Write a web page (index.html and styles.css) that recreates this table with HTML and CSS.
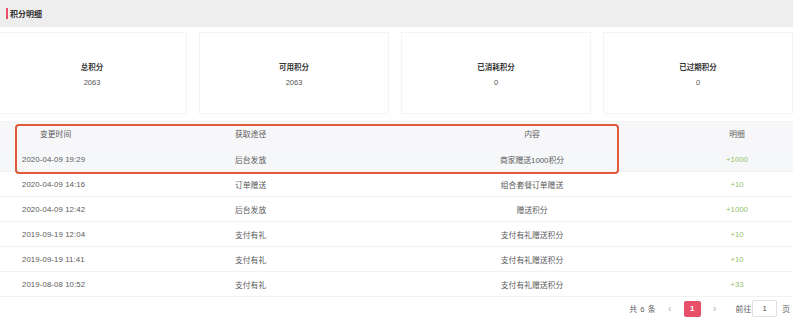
FILE: index.html
```html
<!DOCTYPE html>
<html lang="zh">
<head>
<meta charset="utf-8">
<link rel="stylesheet" href="styles.css">
</head>
<body>
<div class="page">
  <div class="title-bar"><span class="mark"></span><span class="title">积分明细</span></div>
  <div class="cards">
    <div class="card"><div class="card-label">总积分</div><div class="card-value">2063</div></div>
    <div class="card"><div class="card-label">可用积分</div><div class="card-value">2063</div></div>
    <div class="card"><div class="card-label">已消耗积分</div><div class="card-value">0</div></div>
    <div class="card"><div class="card-label">已过期积分</div><div class="card-value">0</div></div>
  </div>
  <div class="table-wrap">
    <div class="row head">
      <div class="c1 h1">变更时间</div>
      <div class="c2">获取途径</div>
      <div class="c3">内容</div>
      <div class="c4">明细</div>
    </div>
    <div class="row hover">
      <div class="c1">2020-04-09 19:29</div>
      <div class="c2">后台发放</div>
      <div class="c3">商家赠送1000积分</div>
      <div class="c4 plus">+1000</div>
    </div>
    <div class="row">
      <div class="c1">2020-04-09 14:16</div>
      <div class="c2">订单赠送</div>
      <div class="c3">组合套餐订单赠送</div>
      <div class="c4 plus">+10</div>
    </div>
    <div class="row">
      <div class="c1">2020-04-09 12:42</div>
      <div class="c2">后台发放</div>
      <div class="c3">赠送积分</div>
      <div class="c4 plus">+1000</div>
    </div>
    <div class="row">
      <div class="c1">2019-09-19 12:04</div>
      <div class="c2">支付有礼</div>
      <div class="c3">支付有礼赠送积分</div>
      <div class="c4 plus">+10</div>
    </div>
    <div class="row">
      <div class="c1">2019-09-19 11:41</div>
      <div class="c2">支付有礼</div>
      <div class="c3">支付有礼赠送积分</div>
      <div class="c4 plus">+10</div>
    </div>
    <div class="row">
      <div class="c1">2019-08-08 10:52</div>
      <div class="c2">支付有礼</div>
      <div class="c3">支付有礼赠送积分</div>
      <div class="c4 plus">+33</div>
    </div>
    <div class="highlight"></div>
  </div>
  <div class="pager">
    <span class="total">共 6 条</span>
    <span class="arrow prev">&lsaquo;</span>
    <span class="pg active">1</span>
    <span class="arrow next">&rsaquo;</span>
    <span class="goto">前往</span>
    <span class="pg-input">1</span>
    <span class="unit">页</span>
  </div>
</div>
</body>
</html>
```

FILE: styles.css
```css
* { box-sizing: border-box; }
html, body {
  margin: 0;
  padding: 0;
  background: #ffffff;
}
body {
  width: 800px;
  height: 318px;
  overflow: hidden;
  font-family: "Liberation Sans", "Noto Sans CJK SC", sans-serif;
  color: #606266;
}
.page {
  width: 793px;
}
.title-bar {
  height: 27px;
  background: #eeeeee;
  display: flex;
  align-items: center;
  padding-left: 6px;
}
.mark {
  width: 2px;
  height: 11px;
  background: #e8506a;
  margin-right: 2px;
}
.title {
  font-size: 8px;
  font-weight: bold;
  color: #333;
}
.cards {
  display: grid;
  grid-template-columns: repeat(4, 190px);
  column-gap: 12px;
  margin-top: 5px;
  margin-left: -3px;
  height: 82px;
}
.card {
  background: #fff;
  border: 1px solid #f4f4f4;
  box-shadow: 0 0 2px rgba(0, 0, 0, 0.025);
  display: flex;
  flex-direction: column;
  align-items: center;
  justify-content: center;
  gap: 6px;
  padding-top: 2px;
}
.card-label {
  font-size: 7.5px;
  font-weight: bold;
  color: #333;
}
.card-value {
  font-size: 7.5px;
  color: #555;
}
.table-wrap {
  position: relative;
  margin-top: 7px;
  border-top: 1px solid #f3f3f3;
}
.row {
  display: grid;
  grid-template-columns: 225px 157px 300px 110px;
  height: 25px;
  align-items: center;
  font-size: 7.8px;
  color: #5a5a5a;
  border-bottom: 1px solid #f2f2f2;
}
.row.head {
  background: #f7f7f9;
  padding-bottom: 2px;
  border-bottom: none;
}
.row.hover {
  background: #f6f7f9;
}
.c1 { padding-left: 22px; letter-spacing: 0.1px; }
.c1.h1 { padding-left: 40px; letter-spacing: 0; }
.c2 { padding-left: 10px; }
.c3 { text-align: center; }
.c4 { text-align: center; }
.plus { color: #93c26a; }
.highlight {
  position: absolute;
  left: 15px;
  top: 2px;
  width: 604px;
  height: 50px;
  border: 2px solid #e25a3c;
  border-radius: 4px;
}
.pager {
  display: flex;
  justify-content: flex-end;
  align-items: center;
  height: 22px;
  padding-top: 1px;
  font-size: 7.8px;
  color: #606266;
  padding-right: 3px;
}
.total { margin-right: 10px; word-spacing: 1px; }
.arrow {
  font-size: 10px;
  color: #aaa;
  width: 8px;
  text-align: center;
}
.prev { margin-right: 10px; }
.next { margin-left: 10px; margin-right: 17px; }
.pg.active {
  width: 17px;
  height: 16px;
  background: #e8506a;
  color: #fff;
  border-radius: 2px;
  display: flex;
  align-items: center;
  justify-content: center;
  font-weight: bold;
}
.goto { margin-right: 1px; }
.pg-input {
  width: 25px;
  height: 17px;
  border: 1px solid #dcdfe6;
  border-radius: 2px;
  display: flex;
  align-items: center;
  justify-content: center;
  margin-right: 5px;
  color: #555;
}
```
